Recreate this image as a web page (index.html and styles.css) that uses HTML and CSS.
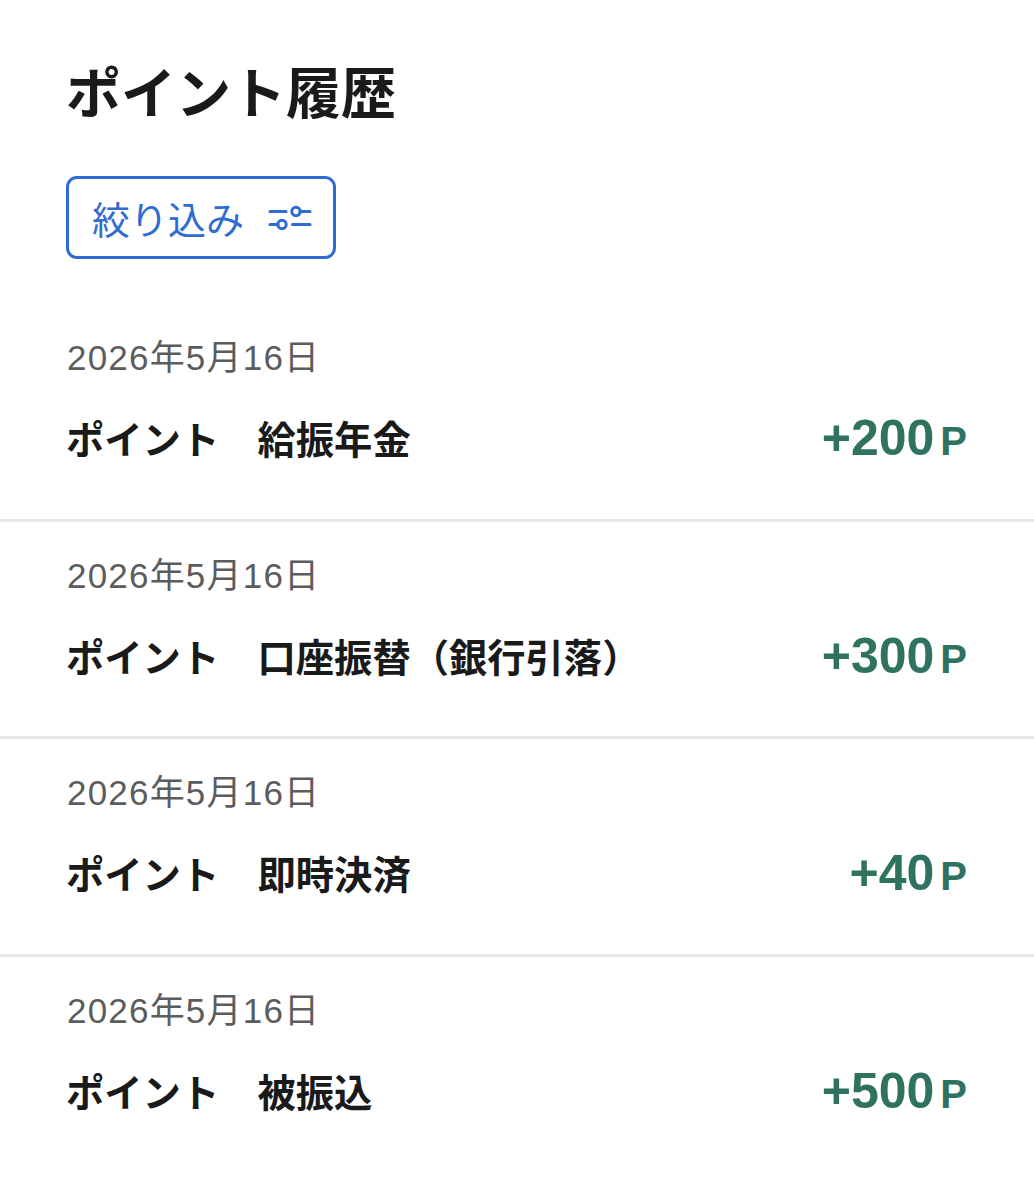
FILE: index.html
```html
<!DOCTYPE html>
<html lang="ja">
<head>
	<meta charset="utf-8">
	<title>ポイント履歴</title>
	<link rel="stylesheet" href="styles.css">
</head>
<body>
	<h1 class="title">ポイント履歴</h1>

	<button class="filter">絞り込み
		<svg class="filter-icon" width="44" height="26" viewBox="0 0 44 26" fill="none" stroke="#2f6bd0" stroke-width="3" stroke-linecap="round">
			<path d="M2 6.5H18"/>
			<circle cx="28" cy="6.5" r="4.2"/>
			<path d="M32 6.5H42"/>
			<path d="M2 19.5H10"/>
			<circle cx="14" cy="19.5" r="4.2"/>
			<path d="M24.5 19.5H42"/>
		</svg>
	</button>

	<div class="history">
		<div class="row">
			<div class="date">2026年5月16日</div>
			<div class="line">
				<span class="name">ポイント　給振年金</span>
				<span class="amount">+200<span class="unit">P</span></span>
			</div>
		</div>
		<div class="row">
			<div class="date">2026年5月16日</div>
			<div class="line">
				<span class="name">ポイント　口座振替（銀行引落）</span>
				<span class="amount">+300<span class="unit">P</span></span>
			</div>
		</div>
		<div class="row">
			<div class="date">2026年5月16日</div>
			<div class="line">
				<span class="name">ポイント　即時決済</span>
				<span class="amount">+40<span class="unit">P</span></span>
			</div>
		</div>
		<div class="row">
			<div class="date">2026年5月16日</div>
			<div class="line">
				<span class="name">ポイント　被振込</span>
				<span class="amount">+500<span class="unit">P</span></span>
			</div>
		</div>
	</div>
</body>
</html>
```
FILE: styles.css
```css
html {
	background: #fff;
}

body {
	margin: 0;
	height: 1200px;
	overflow: hidden;
	font-family: "Noto Sans CJK JP", sans-serif;
	color: #1a1a1a;
}

.title {
	margin: 0;
	padding: 51px 66px 0;
	font-size: 55px;
	line-height: 76px;
	font-weight: 700;
}

.filter {
	display: flex;
	align-items: center;
	gap: 24px;
	margin: 49px 0 0 66px;
	width: 270px;
	height: 83px;
	padding: 0 0 0 23px;
	box-sizing: border-box;
	border: 3px solid #2f6bd0;
	border-radius: 11px;
	background: #fff;
	color: #2f6bd0;
	font-family: inherit;
	font-size: 38px;
}

.filter-icon {
	flex: none;
}

.history {
	margin-top: 45px;
}

.row {
	height: 217.5px;
	box-sizing: border-box;
	padding: 32px 67px 0 66px;
	border-bottom: 3px solid #e8e8e8;
}

.row:last-child {
	border-bottom: none;
}

.date {
	margin-left: 1px;
	font-family: "Liberation Sans", "Noto Sans CJK JP", sans-serif;
	font-size: 35px;
	line-height: 44px;
	letter-spacing: 1.2px;
	color: #5c5c5c;
}

.line {
	display: flex;
	justify-content: space-between;
	align-items: center;
	margin-top: 28px;
	height: 60px;
}

.name {
	padding-bottom: 1px;
	font-size: 38.3px;
	font-weight: 700;
}

.amount {
	font-family: "Liberation Sans", sans-serif;
	font-size: 50px;
	font-weight: 700;
	color: #2f7260;
}

.unit {
	margin-left: 6px;
	font-size: 40px;
}
```
